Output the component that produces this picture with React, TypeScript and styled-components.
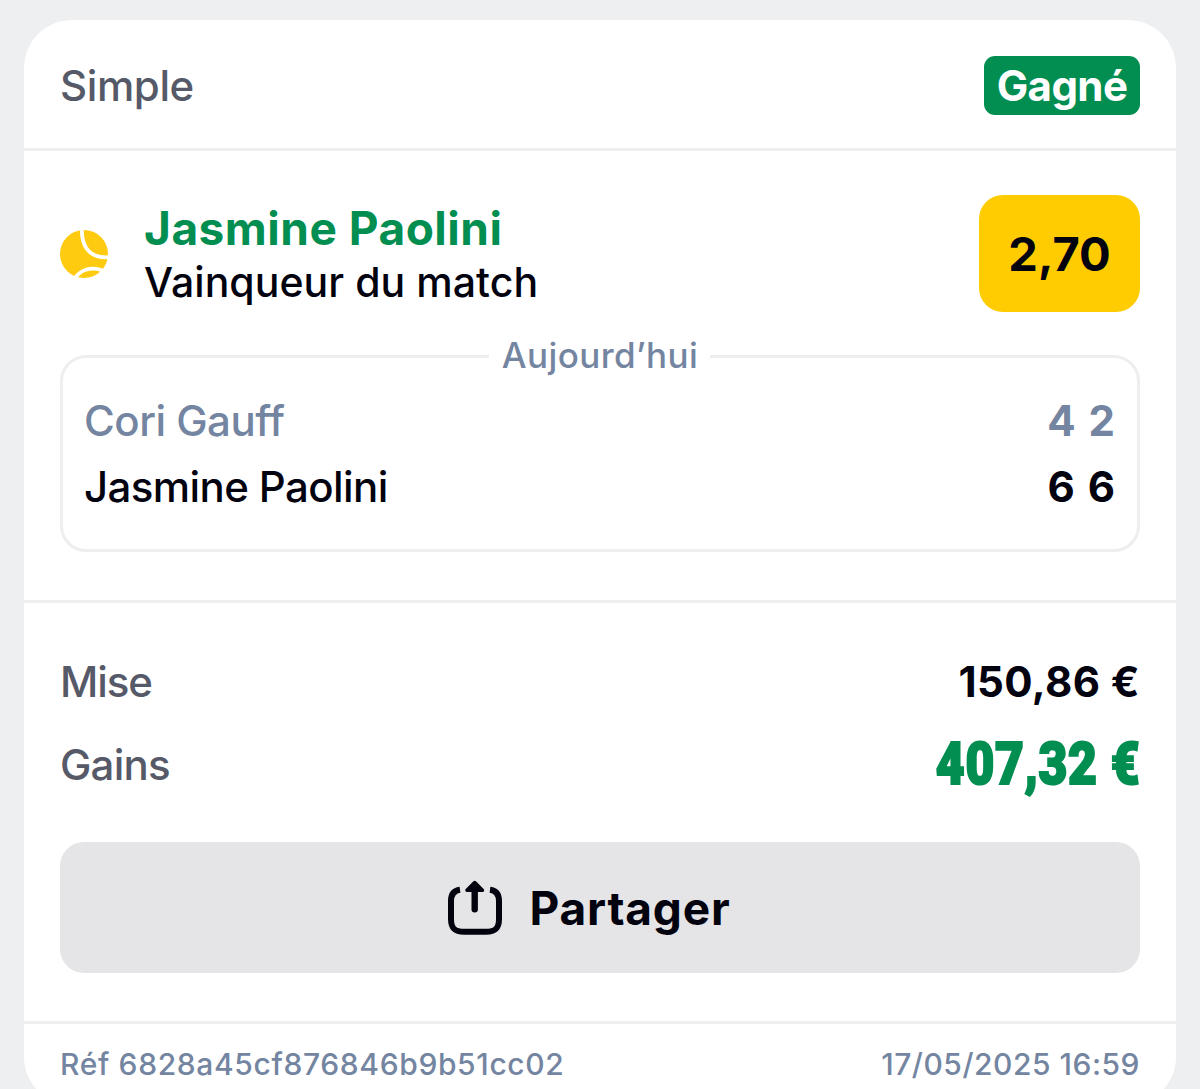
import { FC } from "react";
import styled, { createGlobalStyle } from "styled-components";

const GlobalStyle = createGlobalStyle`
  :root {
    --backgroundColor: #eeeff1;
    --cardColor: #ffffff;
    --dividerColor: #eeeeef;
    --textColor: #03020f;
    --labelColor: #555968;
    --mutedColor: #7485a1;
    --successColor: #028e51;
    --oddsColor: #ffcc02;
    --buttonColor: #e5e5e7;
  }

  * {
    box-sizing: border-box;
  }

  body {
    margin: 0;
    background-color: var(--backgroundColor);
    color: var(--textColor);
    font-family: Inter, "Liberation Sans", sans-serif;
    font-weight: 500;
  }
`;

const Page = styled.main`
  height: 1089px;
  padding: 20px 24px 0;
  overflow: hidden;
`;

const Card = styled.article`
  height: 1085px;
  border-radius: 48px;
  background-color: var(--cardColor);
  overflow: hidden;
`;

const Header = styled.header`
  display: flex;
  align-items: center;
  justify-content: space-between;
  height: 131px;
  padding: 36px 36px 33px;
  border-bottom: 3px solid var(--dividerColor);
`;

type TextProps = {
  $size?: number;
  $weight?: number;
  $spacing?: number;
  $color?: string;
};
const Text = styled.span<TextProps>`
  display: block;
  font-size: ${(props) => props.$size ?? 42}px;
  font-weight: ${(props) => props.$weight ?? 500};
  letter-spacing: ${(props) => props.$spacing ?? 0}px;
  color: ${(props) => props.$color ?? "var(--textColor)"};
  white-space: nowrap;
`;

const Badge = styled.span`
  display: flex;
  align-items: center;
  justify-content: center;
  width: 156px;
  height: 59px;
  border-radius: 11px;
  background-color: var(--successColor);
`;

const BetSection = styled.section`
  height: 452px;
  padding: 44px 36px 0;
  border-bottom: 3px solid var(--dividerColor);
`;

const Selection = styled.div`
  display: flex;
  align-items: center;
  height: 117px;

  svg {
    flex: none;
  }
`;

const SelectionText = styled.div`
  display: flex;
  flex: 1;
  flex-direction: column;
  margin-left: 36px;
  padding-top: 2px;
  line-height: 54px;
`;

const Odds = styled.div`
  display: flex;
  align-items: center;
  justify-content: center;
  width: 161px;
  height: 117px;
  border-radius: 24px;
  background-color: var(--oddsColor);
`;

const MatchBox = styled.fieldset`
  height: 217px;
  margin: 23px 0 0;
  padding: 9px 22px 0 21px;
  min-width: 0;
  border: 3px solid var(--dividerColor);
  border-radius: 26px;
`;

const MatchDay = styled.legend`
  margin: 0 auto;
  padding: 0 12px 3px 13px;
  line-height: 40px;
`;

const PlayerRow = styled.div`
  display: flex;
  align-items: center;
  justify-content: space-between;
  height: 66px;
`;

const Scores = styled.div`
  display: flex;
  gap: 13px;
`;

const Summary = styled.section`
  height: 421px;
  padding: 37px 36px 0;
  border-bottom: 3px solid var(--dividerColor);
`;

const AmountRow = styled.div`
  display: flex;
  align-items: center;
  justify-content: space-between;
  height: 83px;
`;

const Winnings = styled.span`
  padding-bottom: 2px;
  color: var(--successColor);
  font-family: Roboto, sans-serif;
  font-size: 60px;
  font-weight: 900;
  letter-spacing: 0.8px;
  -webkit-text-stroke: 2.2px var(--successColor);
  line-height: 80px;
  white-space: nowrap;
  transform: scaleX(0.83);
  transform-origin: right center;
`;

const ShareButton = styled.button`
  display: flex;
  align-items: center;
  justify-content: center;
  gap: 28px;
  width: 100%;
  height: 131px;
  margin-top: 36px;
  padding: 0 22px 0 0;
  border: 0;
  border-radius: 24px;
  background-color: var(--buttonColor);
  color: inherit;
  font-family: inherit;
`;

const Footer = styled.footer`
  display: flex;
  justify-content: space-between;
  padding: 21px 36px 0;
  line-height: 38px;
`;

const TennisBall: FC = () => (
  <svg width="48" height="48" viewBox="0 0 48 48" fill="none">
    <circle cx="24" cy="24" r="24" fill="#fecb10" />
    <path
      d="M21.8 -1C21.5 18 30.5 28.5 49 27.2M15 48C21 39.5 31 36.5 42 40.2"
      stroke="#fff"
      strokeWidth="3.8"
    />
  </svg>
);

const ShareIcon: FC = () => (
  <svg width="54" height="54" viewBox="0 0 54 54" fill="none" overflow="visible">
    <path
      d="M12 8.8C6 9.6 3 13 3 20V38C3 47.3 6.5 50.8 16 50.8H38C47.5 50.8 51 47.3 51 38V20C51 13 48 9.6 42 8.8"
      stroke="currentColor"
      strokeWidth="6"
    />
    <path
      d="M26.7 8V28.2"
      stroke="currentColor"
      strokeWidth="6.4"
      strokeLinecap="round"
    />
    <path
      d="M26.7 1.6L34.4 9.2H19Z"
      fill="currentColor"
      stroke="currentColor"
      strokeWidth="3.6"
      strokeLinejoin="round"
    />
  </svg>
);

const players = [
  { name: "Cori Gauff", sets: [4, 2], color: "var(--mutedColor)", spacing: -0.5 },
  { name: "Jasmine Paolini", sets: [6, 6], color: "var(--textColor)", spacing: -0.6 },
];

const App: FC = () => {
  return (
    <>
      <GlobalStyle />
      <Page>
        <Card>
          <Header>
            <Text $spacing={-0.4} $color="var(--labelColor)">
              Simple
            </Text>
            <Badge>
              <Text $weight={700} $spacing={-0.6} $color="#fff">
                Gagné
              </Text>
            </Badge>
          </Header>

          <BetSection>
            <Selection>
              <TennisBall />
              <SelectionText>
                <Text
                  $size={46}
                  $weight={700}
                  $spacing={0.5}
                  $color="var(--successColor)"
                >
                  Jasmine Paolini
                </Text>
                <Text $size={41} $spacing={0.05}>
                  Vainqueur du match
                </Text>
              </SelectionText>
              <Odds>
                <Text $size={47} $weight={700}>
                  2,70
                </Text>
              </Odds>
            </Selection>

            <MatchBox>
              <MatchDay>
                <Text $size={35} $spacing={0.4} $color="var(--mutedColor)">
                  Aujourd’hui
                </Text>
              </MatchDay>
              {players.map((player) => (
                <PlayerRow key={player.name}>
                  <Text $color={player.color} $spacing={player.spacing}>
                    {player.name}
                  </Text>
                  <Scores>
                    {player.sets.map((games, index) => (
                      <Text key={index} $weight={700} $color={player.color}>
                        {games}
                      </Text>
                    ))}
                  </Scores>
                </PlayerRow>
              ))}
            </MatchBox>
          </BetSection>

          <Summary>
            <AmountRow>
              <Text $spacing={-1.1} $color="var(--labelColor)">
                Mise
              </Text>
              <Text $weight={700} $spacing={0.4}>
                150,86 €
              </Text>
            </AmountRow>
            <AmountRow>
              <Text $spacing={-0.8} $color="var(--labelColor)">
                Gains
              </Text>
              <Winnings>407,32 €</Winnings>
            </AmountRow>
            <ShareButton type="button">
              <ShareIcon />
              <Text $size={46} $weight={700} $spacing={0.8}>
                Partager
              </Text>
            </ShareButton>
          </Summary>

          <Footer>
            <Text $size={30} $weight={450} $spacing={0.64} $color="var(--mutedColor)">
              Réf 6828a45cf876846b9b51cc02
            </Text>
            <Text $size={30} $weight={450} $spacing={0.52} $color="var(--mutedColor)">
              17/05/2025 16:59
            </Text>
          </Footer>
        </Card>
      </Page>
    </>
  );
};

export default App;
